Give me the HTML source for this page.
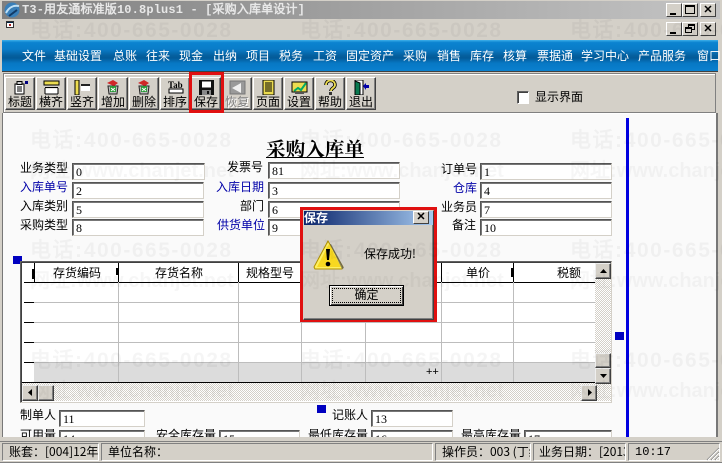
<!DOCTYPE html>
<html><head><meta charset="utf-8">
<style>
html,body{margin:0;padding:0;}
body{width:722px;height:463px;position:relative;overflow:hidden;background:#d4d0c8;font:12px/14px "WenQuanYi Zen Hei","Noto Sans CJK SC",sans-serif;color:#000;}
div,span,svg{position:absolute;box-sizing:border-box;}
.wb{width:16px;height:14px;background:#d4d0c8;border:1px solid;border-color:#fff #404040 #404040 #fff;}
.m{top:49px;color:#fff;white-space:nowrap;}
.b{top:77px;width:30px;height:33px;background:#d4d0c8;border:1px solid;border-color:#fff #404040 #404040 #fff;box-shadow:inset -1px -1px 0 #808080;}
.b span{left:0;width:28px;top:17px;text-align:center;white-space:nowrap;font-size:12px;line-height:14px;}
.b svg{left:6px;top:2px;}
.l{white-space:nowrap;text-align:right;}
.bl{color:#0000a8;}
.f{background:#fff;border:1px solid;border-color:#555 #d4d0c8 #d4d0c8 #555;box-shadow:inset 1px 1px 0 #777;font:12px/15px "Liberation Serif",serif;padding-left:3px;padding-top:1px;overflow:hidden;}
.v{top:263px;width:1px;height:119px;background:#bdbdbd;}
.vh{top:263px;width:1px;height:19px;background:#000;}
.h{left:34px;width:561px;height:1px;background:#bdbdbd;}
.t{height:1px;width:10px;left:24px;background:#000;}
.hd{top:266px;white-space:nowrap;}
.sb{background:#d4d0c8;border:1px solid;border-color:#eee #404040 #404040 #eee;box-shadow:inset -1px -1px 0 #808080;}
.st{top:443px;height:18px;border:1px solid;border-color:#808080 #fff #fff #808080;line-height:16px;padding-left:6px;white-space:nowrap;overflow:hidden;}
.wm{font:bold 21px/24px "Liberation Sans","WenQuanYi Zen Hei",sans-serif;color:rgba(0,0,0,.04);white-space:nowrap;letter-spacing:1.5px;word-spacing:-7px;}
.ww{font:bold 20px/24px "Liberation Sans","WenQuanYi Zen Hei",sans-serif;color:rgba(0,0,0,.035);white-space:nowrap;word-spacing:-5.5px;}
</style></head><body>

<!-- Title bar -->
<div style="left:2px;top:1px;width:718px;height:18px;background:linear-gradient(90deg,#7f7f7f,#c4c4c4);"></div>
<svg style="left:3px;top:1px" width="18" height="18" viewBox="0 0 18 18"><circle cx="9" cy="9" r="7.5" fill="#3a7fb8"/><path d="M3 12C6 6 11 4 16 5" stroke="#bfe0f5" stroke-width="2" fill="none"/><path d="M6 15l8-6" stroke="#123a66" stroke-width="2"/></svg>
<div style="left:22px;top:3px;color:#e8e8e8;font:bold 12px/15px 'Liberation Mono','WenQuanYi Zen Hei',monospace;white-space:nowrap;letter-spacing:.15px">T3-用友通标准版10.8plus1 - [采购入库单设计]</div>
<div class="wb" style="left:666px;top:3px"><div style="left:3px;top:9px;width:6px;height:2px;background:#000"></div></div>
<div class="wb" style="left:682px;top:3px"><div style="left:2px;top:1px;width:10px;height:9px;border:1px solid #000;border-top-width:2px"></div></div>
<div class="wb" style="left:700px;top:3px;font:bold 11px/12px 'Liberation Sans';text-align:center">✕</div>

<!-- Menu row -->
<svg style="left:6px;top:21px" width="8" height="7"><rect x=".5" y=".5" width="7" height="6" fill="#fff" stroke="#333"/><rect x="1" y="1" width="6" height="1" fill="#024"/><rect x="3" y="3" width="2" height="2" fill="#a22"/></svg>
<div class="wb" style="left:666px;top:22px"><div style="left:3px;top:9px;width:6px;height:2px;background:#000"></div></div>
<div class="wb" style="left:682px;top:22px"><div style="left:5px;top:1px;width:7px;height:6px;border:1px solid #000;border-top-width:2px"></div><div style="left:2px;top:4px;width:7px;height:6px;border:1px solid #000;border-top-width:2px;background:#d4d0c8"></div></div>
<div class="wb" style="left:700px;top:22px;font:bold 11px/12px 'Liberation Sans';text-align:center">✕</div>

<!-- Blue menu -->
<div style="left:2px;top:40px;width:716px;height:31px;background:linear-gradient(180deg,#3fb0ea 0,#0b83d0 8%,#0a7cc8 30%,#05609f 50%,#035a98 58%,#0778c4 75%,#0a80cf 100%);"></div>
<div class="m" style="left:22px">文件</div>
<div class="m" style="left:54px">基础设置</div>
<div class="m" style="left:113px">总账</div>
<div class="m" style="left:146px">往来</div>
<div class="m" style="left:179px">现金</div>
<div class="m" style="left:213px">出纳</div>
<div class="m" style="left:246px">项目</div>
<div class="m" style="left:279px">税务</div>
<div class="m" style="left:313px">工资</div>
<div class="m" style="left:346px">固定资产</div>
<div class="m" style="left:403px">采购</div>
<div class="m" style="left:437px">销售</div>
<div class="m" style="left:470px">库存</div>
<div class="m" style="left:503px">核算</div>
<div class="m" style="left:537px">票据通</div>
<div class="m" style="left:581px">学习中心</div>
<div class="m" style="left:638px">产品服务</div>
<div class="m" style="left:697px">窗口</div>

<!-- Toolbar -->
<div style="left:2px;top:71px;width:716px;height:1px;background:#404040"></div>
<div style="left:3px;top:73px;width:713px;height:40px;border:1px solid;border-color:#808080 #808080 #808080 #808080;box-shadow:inset 1px 1px 0 #fff;background:#d4d0c8"></div>

<div class="b" style="left:5px"><svg width="17" height="15" viewBox="0 0 17 15"><rect x="3" y="4" width="9" height="10" fill="#fff" stroke="#000"/><rect x="5" y="1.5" width="5" height="3" fill="#ccc" stroke="#000"/><path d="M5 7h5M5 9h5M5 11h5" stroke="#000"/><rect x="13" y="1" width="3" height="3" fill="#000080"/></svg><span>标题</span></div>
<div class="b" style="left:36px"><svg width="17" height="15" viewBox="0 0 17 15"><rect x="1" y="1" width="15" height="4" fill="#ecdc50" stroke="#000"/><rect x="2" y="7" width="13" height="1" fill="#000"/><rect x="2.500" y="8.500" width="12" height="5" fill="#fff"/><path d="M2 14h13M2 8v6M15 8v6" stroke="#000"/></svg><span>横齐</span></div>
<div class="b" style="left:67px"><svg width="17" height="15" viewBox="0 0 17 15"><rect x="1" y="0" width="4" height="15" fill="#ecdc50" stroke="#000"/><rect x="7" y="4" width="9" height="2" fill="#222"/><rect x="7" y="6" width="9" height="5" fill="#fff"/></svg><span>竖齐</span></div>
<div class="b" style="left:98px"><svg width="17" height="15" viewBox="0 0 17 15"><path d="M3 6h10l-1 8H4z" fill="#bbb" stroke="#222"/><path d="M2 3l6-3 5 3-4 3z" fill="#d02828"/><rect x="5" y="6" width="6" height="6" fill="#2b9a3a"/><path d="M6 8l4 3M10 8l-4 3" stroke="#fff"/></svg><span>增加</span></div>
<div class="b" style="left:129px"><svg width="17" height="15" viewBox="0 0 17 15"><path d="M3 6h10l-1 8H4z" fill="#bbb" stroke="#222"/><path d="M2 3l6-3 5 3-4 3z" fill="#d02828"/><rect x="5" y="6" width="6" height="6" fill="#2b9a3a"/><path d="M6 8l4 3M10 8l-4 3" stroke="#fff"/></svg><span>删除</span></div>
<div class="b" style="left:160px"><svg width="17" height="15" viewBox="0 0 17 15"><text x="1" y="8" font-family="Liberation Serif" font-weight="bold" font-size="9">Tab</text><path d="M2 9h14v4H2z" fill="#fff" stroke="#000"/></svg><span>排序</span></div>
<div class="b" style="left:191px"><svg width="17" height="15" viewBox="0 0 17 15"><path d="M1 0h15v15H1z" fill="#111"/><rect x="4" y="1.500" width="9" height="6" fill="#fff"/><rect x="4" y="10" width="9" height="5" fill="#888"/><rect x="9" y="11" width="2" height="3" fill="#111"/></svg><span>保存</span></div>
<div class="b" style="left:222px;color:#808080;text-shadow:1px 1px 0 #fff"><svg width="17" height="15" viewBox="0 0 17 15"><rect x="1" y="1" width="15" height="13" fill="#9a9a9a" stroke="#777"/><path d="M3 8l9-5v10z" fill="#f0f0f0"/></svg><span>恢复</span></div>
<div class="b" style="left:253px"><svg width="17" height="15" viewBox="0 0 17 15"><rect x="3" y="0" width="11" height="15" fill="#ecdc50" stroke="#000"/><path d="M5 3h7M5 5h7M5 7h7M5 9h7M5 11h7" stroke="#000"/></svg><span>页面</span></div>
<div class="b" style="left:284px"><svg width="17" height="15" viewBox="0 0 17 15"><rect x="1" y="2" width="15" height="10" fill="#ecdc50" stroke="#000"/><path d="M3 11l4-3 3 2 5-7" stroke="#0a6" stroke-width="2" fill="none"/><rect x="4" y="12" width="9" height="2" fill="#555"/></svg><span>设置</span></div>
<div class="b" style="left:315px"><svg width="17" height="15" viewBox="0 0 17 15"><path d="M4 5c0-6 9-6 9 0 0 3-4 3-4 6" stroke="#000" stroke-width="3.500" fill="none"/><path d="M4 5c0-6 9-6 9 0 0 3-4 3-4 6" stroke="#ecdc50" stroke-width="1.800" fill="none"/><rect x="7" y="12" width="3" height="3" fill="#333"/></svg><span>帮助</span></div>
<div class="b" style="left:346px"><svg width="17" height="15" viewBox="0 0 17 15"><path d="M2 0h8v15H2z" fill="#fff" stroke="#000"/><path d="M2 1l5 2v12H2z" fill="#0a7a50" stroke="#000"/><path d="M10 6l3-3v2h3v3h-3v2z" fill="#0000a8"/></svg><span>退出</span></div>

<div style="left:189px;top:72px;width:35px;height:41px;border:3px solid #e01010"></div>

<div style="left:517px;top:91px;width:12px;height:13px;background:#fff;border:1px solid;border-color:#606060 #fff #fff #606060;box-shadow:inset 1px 1px 0 #404040"></div>
<div style="left:535px;top:90px;white-space:nowrap">显示界面</div>

<!-- Form -->
<div style="left:2px;top:113px;width:716px;height:328px;border-left:1px solid #777;border-right:2px solid #777;background:#fafafa"></div>
<div style="left:3px;top:113px;width:713px;height:1px;background:#fff"></div>
<div style="left:626px;top:118px;width:3px;height:319px;background:#0000e0"></div>
<div style="left:266px;top:136px;font:bold 19.6px/24px 'Noto Serif CJK SC',serif;text-decoration:underline;white-space:nowrap">采购入库单</div>

<div class="l" style="left:20px;top:161px">业务类型</div>
<div class="l bl" style="left:20px;top:180px">入库单号</div>
<div class="l" style="left:20px;top:199px">入库类别</div>
<div class="l" style="left:20px;top:218px">采购类型</div>
<div class="f" style="left:72px;top:163px;width:133px;height:17px">0</div>
<div class="f" style="left:72px;top:182px;width:132px;height:17px">2</div>
<div class="f" style="left:72px;top:201px;width:132px;height:17px">5</div>
<div class="f" style="left:72px;top:219px;width:132px;height:17px">8</div>

<div class="l" style="left:227px;top:160px">发票号</div>
<div class="l bl" style="left:216px;top:180px">入库日期</div>
<div class="l" style="left:240px;top:199px">部门</div>
<div class="l bl" style="left:217px;top:218px">供货单位</div>
<div class="f" style="left:268px;top:162px;width:132px;height:17px">81</div>
<div class="f" style="left:268px;top:182px;width:132px;height:17px">3</div>
<div class="f" style="left:268px;top:201px;width:132px;height:17px">6</div>
<div class="f" style="left:268px;top:219px;width:132px;height:17px">9</div>

<div class="l" style="left:441px;top:162px">订单号</div>
<div class="l bl" style="left:453px;top:181px">仓库</div>
<div class="l" style="left:441px;top:200px">业务员</div>
<div class="l" style="left:452px;top:218px">备注</div>
<div class="f" style="left:480px;top:163px;width:132px;height:17px">1</div>
<div class="f" style="left:480px;top:182px;width:132px;height:17px">4</div>
<div class="f" style="left:480px;top:201px;width:132px;height:17px">7</div>
<div class="f" style="left:480px;top:219px;width:132px;height:17px">10</div>

<div style="left:13px;top:256px;width:9px;height:8px;background:#0000c0"></div>
<div style="left:615px;top:332px;width:9px;height:8px;background:#0000c0"></div>

<!-- Grid -->
<div style="left:20px;top:261px;width:592px;height:142px;background:#fff;border:1px solid;border-color:#606060 #d4d0c8 #d4d0c8 #606060;box-shadow:inset 1px 1px 0 #404040"></div>
<div style="left:34px;top:362px;width:561px;height:20px;background:#dcdcdc"></div>
<div class="h" style="top:302px"></div><div class="h" style="top:322px"></div><div class="h" style="top:342px"></div><div class="h" style="top:362px"></div>
<div class="t" style="top:282px"></div><div class="t" style="top:302px"></div><div class="t" style="top:322px"></div><div class="t" style="top:342px"></div><div class="t" style="top:362px"></div>
<div style="left:34px;top:282px;width:561px;height:1px;background:#000"></div>
<div class="v" style="left:118px"></div><div class="v" style="left:238px"></div><div class="v" style="left:301px"></div><div class="v" style="left:365px"></div><div class="v" style="left:441px"></div><div class="v" style="left:513px"></div>
<div class="vh" style="left:34px"></div><div class="vh" style="left:118px"></div><div class="vh" style="left:238px"></div><div class="vh" style="left:301px"></div><div class="vh" style="left:365px"></div><div class="vh" style="left:441px"></div><div class="vh" style="left:513px"></div>
<div style="left:32px;top:269px;width:2px;height:10px;background:#000"></div>
<div style="left:116px;top:268px;width:2px;height:7px;background:#000"></div>
<div style="left:511px;top:268px;width:2px;height:9px;background:#000"></div>
<div class="hd" style="left:53px">存货编码</div>
<div class="hd" style="left:155px">存货名称</div>
<div class="hd" style="left:246px">规格型号</div>
<div class="hd" style="left:466px">单价</div>
<div class="hd" style="left:557px">税额</div>
<div style="left:426px;top:365px;font:11px/14px 'Liberation Sans'">++</div>
<div style="left:22px;top:382px;width:574px;height:1px;background:#000"></div>

<!-- Scrollbars -->
<div style="left:595px;top:263px;width:16px;height:120px;background-color:#e8e6e2;background-image:repeating-conic-gradient(#d4d0c8 0 25%,#fff 0 50%);background-size:2px 2px"></div>
<div style="left:22px;top:383px;width:589px;height:18px;background-color:#e8e6e2;background-image:repeating-conic-gradient(#d4d0c8 0 25%,#fff 0 50%);background-size:2px 2px"></div>
<div class="sb" style="left:595px;top:263px;width:16px;height:16px"><svg style="left:4px;top:5px" width="7" height="4"><path d="M3.500 0L7 4H0z"/></svg></div>
<div class="sb" style="left:595px;top:353px;width:16px;height:15px"></div>
<div class="sb" style="left:595px;top:368px;width:16px;height:16px"><svg style="left:4px;top:5px" width="7" height="4"><path d="M0 0h7L3.500 4z"/></svg></div>
<div class="sb" style="left:22px;top:385px;width:16px;height:16px"><svg style="left:5px;top:3px" width="4" height="7"><path d="M4 0v7L0 3.500z"/></svg></div>
<div class="sb" style="left:38px;top:385px;width:16px;height:16px"></div>
<div class="sb" style="left:581px;top:385px;width:16px;height:16px"><svg style="left:6px;top:3px" width="4" height="7"><path d="M0 0v7l4-3.500z"/></svg></div>

<!-- Bottom fields -->
<div style="left:317px;top:405px;width:9px;height:8px;background:#0000c0"></div>
<div class="l" style="left:20px;top:408px">制单人</div>
<div class="f" style="left:59px;top:410px;width:86px;height:17px">11</div>
<div class="l" style="left:332px;top:408px">记账人</div>
<div class="f" style="left:371px;top:410px;width:82px;height:17px">13</div>
<div style="left:3px;top:427px;width:713px;height:10px;overflow:hidden">
<div class="l" style="left:17px;top:1px">可用量</div>
<div class="f" style="left:56px;top:3px;width:86px;height:17px">14</div>
<div class="l" style="left:153px;top:1px">安全库存量</div>
<div class="f" style="left:216px;top:3px;width:81px;height:17px">15</div>
<div class="l" style="left:305px;top:1px">最低库存量</div>
<div class="f" style="left:368px;top:3px;width:82px;height:17px">16</div>
<div class="l" style="left:458px;top:1px">最高库存量</div>
<div class="f" style="left:521px;top:3px;width:88px;height:17px">17</div>
</div>

<!-- Status bar -->
<div style="left:2px;top:437px;width:716px;height:4px;background:#d4d0c8"></div>
<div style="left:0;top:441px;width:722px;height:1px;background:#808080"></div>
<div style="left:0;top:462px;width:722px;height:1px;background:#808080"></div>
<div class="st" style="left:2px;width:97px">账套：[004]12年</div>
<div class="st" style="left:101px;width:332px">单位名称：</div>
<div class="st" style="left:435px;width:96px">操作员：003 (丁结</div>
<div class="st" style="left:533px;width:93px;padding-left:5px">业务日期：[2013</div>
<div class="st" style="left:628px;width:92px;font-family:'Liberation Mono',monospace;">10:17</div>
<svg style="left:706px;top:447px" width="14" height="14"><path d="M13 1L1 13M13 5L5 13M13 9L9 13" stroke="#808080" fill="none"/><path d="M13 2L2 13M13 6L6 13M13 10L10 13" stroke="#fff" fill="none"/></svg>

<!-- Dialog -->
<div style="left:300px;top:207px;width:137px;height:115px;border:3px solid #e01010;background:#d4d0c8"></div>
<div style="left:303px;top:210px;width:131px;height:110px;border:1px solid;border-color:#d4d0c8 #404040 #404040 #d4d0c8;box-shadow:inset -1px -1px 0 #808080"></div>
<div style="left:304px;top:211px;width:129px;height:14px;background:linear-gradient(90deg,#0a246a,#a6caf0)"></div>
<div style="left:304px;top:211px;color:#fff;font-weight:bold;line-height:14px;white-space:nowrap">保存</div>
<div class="wb" style="left:413px;top:211px;width:16px;height:13px;font:bold 11px/11px 'Liberation Sans';text-align:center">✕</div>
<svg style="left:313px;top:240px" width="32" height="31" viewBox="0 0 32 31"><path d="M15 1L1 27l1 2h27l1-2z" fill="#fff060" stroke="#b09000"/><path d="M16 4L4 27h24z" fill="#f8d820"/><path d="M31 28L18 4l-1 0 12 25z" fill="#555" opacity=".7"/><path d="M13 9h4l-1 11h-2z" fill="#000"/><circle cx="15" cy="24" r="2.300" fill="#000"/></svg>
<div style="left:364px;top:247px;white-space:nowrap">保存成功!</div>
<div style="left:329px;top:285px;width:75px;height:21px;background:#d4d0c8;border:1px solid #000;box-shadow:inset 1px 1px 0 #fff,inset -1px -1px 0 #404040"></div>
<div style="left:332px;top:288px;width:69px;height:15px;border:1px dotted #000"></div>
<div style="left:329px;top:288px;width:75px;text-align:center;white-space:nowrap">确定</div>

<!-- Watermark -->
<div class="wm" style="left:30px;top:19px">电话: 400-665-0028</div>
<div class="wm" style="left:300px;top:19px">电话: 400-665-0028</div>
<div class="wm" style="left:570px;top:19px">电话: 400-665-0028</div>
<div class="wm" style="left:30px;top:129px">电话: 400-665-0028</div>
<div class="wm" style="left:300px;top:129px">电话: 400-665-0028</div>
<div class="wm" style="left:570px;top:129px">电话: 400-665-0028</div>
<div class="ww" style="left:30px;top:159px">网址: www.chanjet.net</div>
<div class="ww" style="left:300px;top:159px">网址: www.chanjet.net</div>
<div class="ww" style="left:570px;top:159px">网址: www.chanjet.net</div>
<div class="wm" style="left:30px;top:239px">电话: 400-665-0028</div>
<div class="wm" style="left:300px;top:239px">电话: 400-665-0028</div>
<div class="wm" style="left:570px;top:239px">电话: 400-665-0028</div>
<div class="ww" style="left:30px;top:269px">网址: www.chanjet.net</div>
<div class="ww" style="left:300px;top:269px">网址: www.chanjet.net</div>
<div class="ww" style="left:570px;top:269px">网址: www.chanjet.net</div>
<div class="wm" style="left:30px;top:349px">电话: 400-665-0028</div>
<div class="wm" style="left:300px;top:349px">电话: 400-665-0028</div>
<div class="wm" style="left:570px;top:349px">电话: 400-665-0028</div>
<div class="ww" style="left:30px;top:379px">网址: www.chanjet.net</div>
<div class="ww" style="left:300px;top:379px">网址: www.chanjet.net</div>
<div class="ww" style="left:570px;top:379px">网址: www.chanjet.net</div>
</body></html>
